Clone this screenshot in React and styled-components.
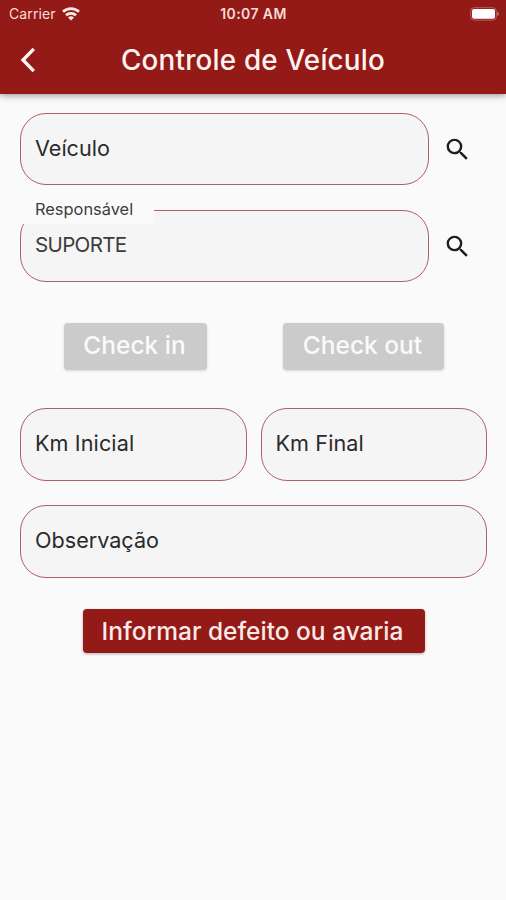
import React from 'react';
import styled, { createGlobalStyle } from 'styled-components';
import { MdSearch } from 'react-icons/md';

const App = () => {
    return (
        <>
            <GlobalStyle />
            <Screen>
                <Header>
                    <StatusBar>
                        <Carrier>
                            Carrier
                            <WifiIcon />
                        </Carrier>
                        <Clock>10:07 AM</Clock>
                        <Battery>
                            <BatteryIcon />
                        </Battery>
                    </StatusBar>
                    <NavBar>
                        <BackButton aria-label="Voltar">
                            <BackIcon />
                        </BackButton>
                        <Title>Controle de Veículo</Title>
                    </NavBar>
                </Header>
                <Form>
                    <SearchRow>
                        <Field>
                            <FieldText>Veículo</FieldText>
                        </Field>
                        <SearchButton aria-label="Buscar veículo">
                            <MdSearch />
                        </SearchButton>
                    </SearchRow>
                    <SearchRow>
                        <Field>
                            <FloatingLabel>Responsável</FloatingLabel>
                            <FieldText $value>SUPORTE</FieldText>
                        </Field>
                        <SearchButton aria-label="Buscar responsável">
                            <MdSearch />
                        </SearchButton>
                    </SearchRow>
                    <CheckRow>
                        <Button $disabled $width="143px">Check in</Button>
                        <Button $disabled $width="161px">Check out</Button>
                    </CheckRow>
                    <KmRow>
                        <Field $tall>
                            <FieldText $spacing="0.1px">Km Inicial</FieldText>
                        </Field>
                        <Field $tall>
                            <FieldText $spacing="0.1px">Km Final</FieldText>
                        </Field>
                    </KmRow>
                    <Field $tall>
                        <FieldText>Observação</FieldText>
                    </Field>
                    <Actions>
                        <Button $width="342px">Informar defeito ou avaria</Button>
                    </Actions>
                </Form>
            </Screen>
        </>
    );
};

const WifiIcon = () => (
    <svg width="18" height="14" viewBox="0 0 18 14" fill="none" stroke="#fbe9e7" strokeWidth="2.7">
        <path d="M1 4.8a11.5 11.5 0 0 1 16 0" />
        <path d="M4 8.3a7.2 7.2 0 0 1 10 0" />
        <path d="M9 13.6 6 10.6a4.3 4.3 0 0 1 6 0z" fill="#fbe9e7" stroke="none" />
    </svg>
);

const BatteryIcon = () => (
    <svg width="30" height="14" viewBox="0 0 30 14">
        <rect x="0.7" y="0.7" width="25.6" height="12.4" rx="3.4" fill="none" stroke="#fff" strokeOpacity="0.3" />
        <rect x="2" y="2" width="23" height="9.8" rx="2" fill="#fff" />
        <path d="M27.4 4.8c1.9.6 1.9 3.6 0 4.2z" fill="#fff" fillOpacity="0.5" />
    </svg>
);

const BackIcon = () => (
    <svg width="16" height="26" viewBox="0 0 16 26" fill="none" stroke="#fff5f3" strokeWidth="3.4">
        <path d="M13.8 1.9 3 13l10.8 11.1" />
    </svg>
);

const GlobalStyle = createGlobalStyle`
    * {
        box-sizing: border-box;
    }

    body {
        margin: 0;
        background: #fafafa;
        font-family: Inter, 'Liberation Sans', sans-serif;
    }
`
const Screen = styled.div`
    min-height: 100vh;
    background: #fafafa;
`
const Header = styled.header`
    height: 94px;
    background: #941a17;
    color: #fff3f0;
    box-shadow: 0 1px 7px rgba(0, 0, 0, 0.45);
`
const StatusBar = styled.div`
    display: grid;
    grid-template-columns: 1fr auto 1fr;
    align-items: center;
    height: 27px;
    padding: 0 6px 0 9px;
    font-size: 14px;
    color: #f8dcd8;
`
const Carrier = styled.div`
    display: flex;
    align-items: center;
    gap: 6px;
    letter-spacing: 0.1px;
`
const Clock = styled.div`
    margin-left: -2px;
    font-size: 14px;
    font-weight: 600;
    letter-spacing: 0.4px;
`
const Battery = styled.div`
    display: flex;
    justify-content: flex-end;
`
const NavBar = styled.div`
    display: grid;
    grid-template-columns: 56px 1fr 56px;
    align-items: center;
    height: 67px;
    padding-bottom: 2px;
`
const BackButton = styled.button`
    display: flex;
    justify-content: center;
    padding: 0;
    border: 0;
    background: none;
`
const Title = styled.h1`
    margin: 1px 0 0;
    text-align: center;
    font-size: 27.8px;
    font-weight: 500;
    line-height: 34px;
    letter-spacing: 0.2px;
    white-space: nowrap;
`
const Form = styled.main`
    padding: 19px 19px 0 20px;
`
const SearchRow = styled.div`
    display: grid;
    grid-template-columns: 409px 56px;
    margin-bottom: 25px;
`
const Field = styled.div`
    position: relative;
    display: flex;
    align-items: center;
    height: ${({ $tall }) => ($tall ? '73px' : '72px')};
    padding: 0 14px 3px;
    border: 1.35px solid #b15f62;
    border-radius: 26px;
    background: #f5f5f5;
`
const FieldText = styled.span`
    font-size: ${({ $value }) => ($value ? '20.6px' : '21.6px')};
    line-height: 28px;
    letter-spacing: ${({ $value, $spacing }) => ($value ? '-0.7px' : $spacing || '0')};
    color: ${({ $value }) => ($value ? '#3c3c3c' : '#2a2a2a')};
`
/* sits over the top border of its field */
const FloatingLabel = styled.span`
    position: absolute;
    top: -15px;
    left: -2px;
    width: 135px;
    padding: 0 0 1px 16px;
    background: #fafafa;
    font-size: 16.4px;
    line-height: 27px;
    color: #3c3c3c;
`
const SearchButton = styled.button`
    display: flex;
    align-items: center;
    justify-content: center;
    padding: 0;
    border: 0;
    background: none;
    color: #1e1e1e;
    font-size: 29px;
`
const CheckRow = styled.div`
    display: flex;
    justify-content: space-between;
    margin: 41px 43px 38px 44px;
`
const KmRow = styled.div`
    display: grid;
    grid-template-columns: 1fr 1fr;
    gap: 14px;
    margin-bottom: 24px;
`
const Button = styled.button`
    width: ${({ $width }) => $width};
    height: ${({ $disabled }) => ($disabled ? '47px' : '44px')};
    padding: 0 2px ${({ $disabled }) => ($disabled ? '3px' : '0')} 0;
    border: 0;
    border-radius: 4px;
    background: ${({ $disabled }) => ($disabled ? '#cbcbcb' : '#941a17')};
    box-shadow: 0 1px 3px rgba(0, 0, 0, ${({ $disabled }) => ($disabled ? 0.15 : 0.3)});
    color: ${({ $disabled }) => ($disabled ? '#fafafa' : '#fbe9e7')};
    font-family: inherit;
    font-size: 24.5px;
    font-weight: 500;
    white-space: nowrap;
`
const Actions = styled.div`
    display: flex;
    justify-content: center;
    margin-top: 31px;
`
export default App;
